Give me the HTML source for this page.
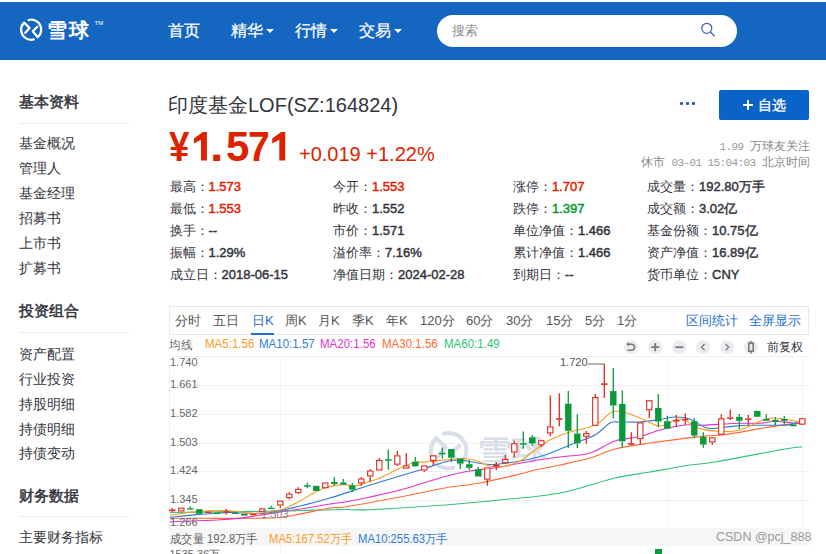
<!DOCTYPE html>
<html><head><meta charset="utf-8">
<style>
*{margin:0;padding:0;box-sizing:border-box}
html,body{width:826px;height:554px;overflow:hidden;background:#fff;font-family:"Liberation Sans",sans-serif;color:#33353c}
.a{position:absolute;white-space:nowrap}
#hdr{position:absolute;left:0;top:2px;width:826px;height:58px;background:#1566c0}
.nav{color:#fff;font-size:16px;top:20.5px;-webkit-text-stroke:0.25px #fff}
.caret{display:inline-block;width:0;height:0;border-left:4px solid transparent;border-right:4px solid transparent;border-top:4px solid #fff;vertical-align:middle;margin-left:3px;position:relative;top:0px}
#search{left:437px;top:15px;width:300px;height:32px;background:#fff;border-radius:16px}
.side{font-size:14px;color:#33353c;left:19px}
.sideh{font-size:15px;font-weight:500;-webkit-text-stroke:0.5px #33353c;color:#33353c;left:19px}
.sline{position:absolute;left:19px;width:110px;height:1px;background:#e6edf3}
.q{font-size:13px;color:#33353c}
.q b{color:#33353c;font-weight:normal;-webkit-text-stroke:0.45px}
.r{color:#dd2200!important}
.g{color:#009933!important}
.tab{top:312px;font-size:13px;color:#555}
.ma{top:337px;font-size:12px;transform:scaleX(0.96);transform-origin:0 0}
.ic{top:340px;width:14px;height:14px;border-radius:7px;background:#ebecef;color:#888;font-size:11px;line-height:14px;text-align:center}
.ax{left:170px;font-size:11px;color:#666}
.vol{top:531px;font-size:12px;transform:scaleX(0.94);transform-origin:0 0}
.mono{font-family:"Liberation Mono",monospace;font-size:11px;letter-spacing:-0.6px;color:#999}
.pr{top:123px;font-size:42px;font-weight:bold;color:#dd2200;transform:scaleX(0.93);transform-origin:0 0}
</style></head><body>
<div id="hdr"></div>
<!-- logo -->
<svg class="a" style="left:0;top:0" width="60" height="60" viewBox="0 0 60 60">
 <g fill="none" stroke="#fff" stroke-width="2.3" stroke-linecap="round" stroke-linejoin="round">
 <path d="M33.8 39.4 A10 10 0 0 1 24.1 22.6 L29.5 27.9 L25.3 32.8"/>
 <path d="M28.6 20 A10 10 0 0 1 37.8 37.2 L32.8 31.3 L37.2 26.9"/>
 </g>
</svg>
<div class="a" style="left:47px;top:17px;font-size:20px;font-weight:bold;color:#fff;letter-spacing:2px">雪球</div>
<div class="a" style="left:94.5px;top:20px;font-size:6px;color:#fff">TM</div>
<div class="a nav" style="left:168px">首页</div>
<div class="a nav" style="left:231px">精华<span class="caret"></span></div>
<div class="a nav" style="left:295px">行情<span class="caret"></span></div>
<div class="a nav" style="left:359px">交易<span class="caret"></span></div>
<div class="a" id="search"></div>
<div class="a" style="left:452px;top:22px;font-size:13px;color:#8c8c8c">搜索</div>
<svg class="a" style="left:0;top:0" width="826" height="60" viewBox="0 0 826 60">
 <circle cx="706.8" cy="28.3" r="5" fill="none" stroke="#4a62bd" stroke-width="1.3"/>
 <path d="M710.4 31.9 L714.2 35.7" stroke="#4a62bd" stroke-width="1.4" stroke-linecap="round"/>
</svg>

<!-- sidebar -->
<div class="a sideh" style="top:93px">基本资料</div>
<div class="sline" style="top:123px"></div>
<div class="a side" style="top:135px">基金概况</div>
<div class="a side" style="top:160px">管理人</div>
<div class="a side" style="top:185px">基金经理</div>
<div class="a side" style="top:210px">招募书</div>
<div class="a side" style="top:235px">上市书</div>
<div class="a side" style="top:260px">扩募书</div>
<div class="a sideh" style="top:302px">投资组合</div>
<div class="sline" style="top:332px"></div>
<div class="a side" style="top:345.5px">资产配置</div>
<div class="a side" style="top:370.5px">行业投资</div>
<div class="a side" style="top:395.5px">持股明细</div>
<div class="a side" style="top:420.5px">持债明细</div>
<div class="a side" style="top:445px">持债变动</div>
<div class="a sideh" style="top:486.5px">财务数据</div>
<div class="sline" style="top:516px"></div>
<div class="a side" style="top:528.5px">主要财务指标</div>

<!-- title -->
<div class="a" style="left:168px;top:92px;font-size:20px;color:#33353c">印度基金LOF(SZ:164824)</div>
<div class="a" style="left:680px;top:102px;width:3px;height:3px;background:#1e5ab4;border-radius:1px"></div><div class="a" style="left:686px;top:102px;width:3px;height:3px;background:#1e5ab4;border-radius:1px"></div><div class="a" style="left:692px;top:102px;width:3px;height:3px;background:#1e5ab4;border-radius:1px"></div>
<div class="a" style="left:719px;top:90px;width:90px;height:30px;background:#0a63c9;border-radius:2px;color:#fff;font-size:14px;text-align:center;line-height:30px;font-weight:500;-webkit-text-stroke:0.3px #fff"><span style="display:inline-block;position:relative;width:10px;height:10px;margin-right:5px;top:0px"><i style="position:absolute;left:0;top:4px;width:10px;height:2px;background:#fff"></i><i style="position:absolute;left:4px;top:0;width:2px;height:10px;background:#fff"></i></span>自选</div>
<div class="a pr" style="left:168.5px;transform:scaleX(0.87)">¥</div><svg class="a" style="left:0;top:0" width="300" height="170" viewBox="0 0 300 170"><g fill="#dd2200">
<polygon points="202.8,131.9 206.9,131.9 206.9,160.6 201,160.6 201,139.8 193.9,143.6 193.9,138.4"/>
<polygon transform="translate(78.3,0)" points="202.8,131.9 206.9,131.9 206.9,160.6 201,160.6 201,139.8 193.9,143.6 193.9,138.4"/>
</g></svg><div class="a pr" style="left:209.5px;transform:scaleX(1.15)">.</div><div class="a pr" style="left:226px;transform:scaleX(1)">5</div><div class="a pr" style="left:247.5px">7</div>
<div class="a" style="left:299px;top:143px;font-size:20px;color:#dd2200">+0.019 +1.22%</div>
<div class="a" style="right:16.5px;top:138px;font-size:12px;color:#888"><span class="mono">1.99 </span>万球友关注</div>
<div class="a" style="right:16.5px;top:154px;font-size:12px;color:#888">休市<span class="mono"> 03-01 15:04:03 </span>北京时间</div>

<!-- quote table -->
<div class="a q" style="left:169.5px;top:178px">最高：<b class="r">1.573</b></div>
<div class="a q" style="left:169.5px;top:200px">最低：<b class="r">1.553</b></div>
<div class="a q" style="left:169.5px;top:222px">换手：<b>--</b></div>
<div class="a q" style="left:169.5px;top:244px">振幅：<b>1.29%</b></div>
<div class="a q" style="left:169.5px;top:266px">成立日：<b>2018-06-15</b></div>
<div class="a q" style="left:333px;top:178px">今开：<b class="r">1.553</b></div>
<div class="a q" style="left:333px;top:200px">昨收：<b>1.552</b></div>
<div class="a q" style="left:333px;top:222px">市价：<b>1.571</b></div>
<div class="a q" style="left:333px;top:244px">溢价率：<b>7.16%</b></div>
<div class="a q" style="left:333px;top:266px">净值日期：<b>2024-02-28</b></div>
<div class="a q" style="left:513px;top:178px">涨停：<b class="r">1.707</b></div>
<div class="a q" style="left:513px;top:200px">跌停：<b class="g">1.397</b></div>
<div class="a q" style="left:513px;top:222px">单位净值：<b>1.466</b></div>
<div class="a q" style="left:513px;top:244px">累计净值：<b>1.466</b></div>
<div class="a q" style="left:513px;top:266px">到期日：<b>--</b></div>
<div class="a q" style="left:647px;top:178px">成交量：<b>192.80万手</b></div>
<div class="a q" style="left:647px;top:200px">成交额：<b>3.02亿</b></div>
<div class="a q" style="left:647px;top:222px">基金份额：<b>10.75亿</b></div>
<div class="a q" style="left:647px;top:244px">资产净值：<b>16.89亿</b></div>
<div class="a q" style="left:647px;top:266px">货币单位：<b>CNY</b></div>


<!-- chart -->
<div class="a" style="left:169px;top:306px;width:640px;height:29px;border:1px solid #e8e8ea"></div>
<div class="a tab" style="left:175px">分时</div>
<div class="a tab" style="left:213px">五日</div>
<div class="a tab" style="left:252px;color:#1e6fd0">日K</div>
<div class="a" style="left:251px;top:333px;width:23px;height:2px;background:#1e6fd0"></div>
<div class="a tab" style="left:285px">周K</div>
<div class="a tab" style="left:318px">月K</div>
<div class="a tab" style="left:352px">季K</div>
<div class="a tab" style="left:386px">年K</div>
<div class="a tab" style="left:420px">120分</div>
<div class="a tab" style="left:466px">60分</div>
<div class="a tab" style="left:506px">30分</div>
<div class="a tab" style="left:546px">15分</div>
<div class="a tab" style="left:585px">5分</div>
<div class="a tab" style="left:617px">1分</div>
<div class="a tab" style="left:686px;color:#1e6fd0">区间统计</div>
<div class="a tab" style="left:749px;color:#1e6fd0">全屏显示</div>
<div class="a ma" style="left:169px;color:#666">均线</div>
<div class="a ma" style="left:204.5px;color:#ff9a1f">MA5:1.56</div>
<div class="a ma" style="left:259px;color:#2f7bd8">MA10:1.57</div>
<div class="a ma" style="left:319.5px;color:#e133c8">MA20:1.56</div>
<div class="a ma" style="left:382px;color:#ff6a33">MA30:1.56</div>
<div class="a ma" style="left:444px;color:#2fc27a">MA60:1.49</div>
<svg class="a" style="left:610px;top:330px" width="160" height="30" viewBox="610 330 160 30">
<g fill="#ebecef"><circle cx="631.2" cy="347.2" r="7"/><circle cx="655.2" cy="347.2" r="7"/><circle cx="679.3" cy="347.2" r="7"/><circle cx="703.1" cy="347.2" r="7"/><circle cx="727.1" cy="347.2" r="7"/><circle cx="751" cy="347.2" r="7"/></g>
<g fill="none" stroke="#7a7a7a" stroke-width="1.5">
<path d="M627.5 344.2 H631.5 A3 3 0 0 1 631.5 350.2 H627.5"/>
<path d="M629 342.7 L627.3 344.2 L629 345.7" stroke-width="1.2"/>
<path d="M651.2 347.2 H659.2 M655.2 343.2 V351.2" stroke-width="1.8"/>
<path d="M675.3 347.2 H683.3" stroke-width="1.8"/>
<path d="M704.6 344 L701.5 347.2 L704.6 350.4" stroke-width="1.3"/>
<path d="M725.6 344 L728.7 347.2 L725.6 350.4" stroke-width="1.3"/>
<rect x="748.8" y="343.2" width="4.4" height="8" stroke-width="1.6"/>
<path d="M751 341 V343.2 M751 351.2 V353.4" stroke-width="1.4"/>
</g>
</svg>
<div class="a" style="left:767px;top:339px;font-size:12px;color:#33353c">前复权</div>
<div class="a" style="left:169px;top:528px;width:640px;height:18px;background:#f6f6f7"></div>
<svg class="a" style="left:0;top:0" width="826" height="554" viewBox="0 0 826 554">
<g stroke="#f0f0f0" stroke-width="1">
<line x1="169.5" y1="356.5" x2="809" y2="356.5"/>
<line x1="169.5" y1="385.5" x2="809" y2="385.5"/>
<line x1="169.5" y1="414.5" x2="809" y2="414.5"/>
<line x1="169.5" y1="443.5" x2="809" y2="443.5"/>
<line x1="169.5" y1="471.5" x2="809" y2="471.5"/>
<line x1="169.5" y1="500.5" x2="809" y2="500.5"/>
<line x1="169.5" y1="356" x2="169.5" y2="528"/>
<line x1="280.5" y1="356" x2="280.5" y2="554" stroke="#f4f4f4"/>
<line x1="667.5" y1="356" x2="667.5" y2="554" stroke="#f4f4f4"/>
<line x1="802.5" y1="356" x2="802.5" y2="528" stroke="#f4f4f4"/>
</g>
<g transform="translate(448.6,450.7) scale(1.76) translate(-31.2,-29.7)" fill="none" stroke="#d8dfe9" stroke-width="2.3" stroke-linecap="round" stroke-linejoin="round">
 <path d="M33.8 39.4 A10 10 0 0 1 24.1 22.6 L29.5 27.9 L25.3 32.8"/>
 <path d="M28.6 20 A10 10 0 0 1 37.8 37.2 L32.8 31.3 L37.2 26.9"/>
</g>
<text transform="translate(477,459) scale(1.3,1)" x="0" y="0" font-size="27" font-weight="bold" fill="#d8dfe9" font-family="Liberation Sans, sans-serif">雪球</text>
<path d="M170,512.5 C185.8,512.3 243.3,511.6 265,511.3 C286.7,511.0 286.7,510.8 300,510.5 C313.3,510.2 333.3,509.6 345,509.5 C356.7,509.4 353.3,510.4 370,509.7 C386.7,508.9 423.3,506.6 445,505 C466.7,503.4 480.8,502.0 500,500 C519.2,498.0 540.8,496.7 560,493 C579.2,489.3 600.0,481.5 615,478 C630.0,474.5 637.5,474.2 650,472 C662.5,469.8 679.2,466.7 690,465 C700.8,463.3 699.2,464.7 715,462 C730.8,459.3 770.5,451.5 785,449 C799.5,446.5 799.2,447.2 802,446.9" fill="none" stroke="#2fc27a" stroke-width="1.1"/>
<path d="M170,518.2 C185.8,518.2 245.0,518.6 265,518.2 C285.0,517.8 279.2,517.7 290,516 C300.8,514.3 320.8,509.5 330,508 C339.2,506.5 333.3,508.8 345,507 C356.7,505.2 383.3,500.2 400,497 C416.7,493.8 431.7,490.3 445,488 C458.3,485.7 467.5,485.3 480,483 C492.5,480.7 510.8,476.2 520,474 C529.2,471.8 528.3,471.5 535,470 C541.7,468.5 550.8,467.0 560,465 C569.2,463.0 580.8,460.7 590,458 C599.2,455.3 605.0,451.5 615,449 C625.0,446.5 635.8,445.1 650,443 C664.2,440.9 687.5,438.0 700,436.6 C712.5,435.2 715.0,435.9 725,434.6 C735.0,433.3 750.0,430.3 760,428.6 C770.0,426.9 778.0,425.5 785,424.6 C792.0,423.7 799.2,423.5 802,423.3" fill="none" stroke="#ff6a33" stroke-width="1.1"/>
<path d="M170,521.9 C178.3,521.5 206.7,520.6 220,519.8 C233.3,518.9 242.5,517.7 250,516.8 C257.5,515.9 256.7,515.7 265,514.4 C273.3,513.1 289.2,510.7 300,509 C310.8,507.3 322.5,505.2 330,504 C337.5,502.8 338.3,503.2 345,502 C351.7,500.8 360.8,499.0 370,497 C379.2,495.0 387.5,493.4 400,490 C412.5,486.6 433.3,479.7 445,476.5 C456.7,473.3 460.8,472.6 470,471 C479.2,469.4 489.2,468.8 500,467 C510.8,465.2 525.0,462.2 535,460.5 C545.0,458.8 550.8,458.2 560,457 C569.2,455.8 580.8,455.7 590,453 C599.2,450.3 606.7,443.8 615,441 C623.3,438.2 632.5,438.3 640,436.5 C647.5,434.7 652.5,431.9 660,430 C667.5,428.1 678.3,425.8 685,425 C691.7,424.2 690.8,425.6 700,425.3 C709.2,425.0 730.0,423.6 740,423.3 C750.0,423.0 754.2,423.6 760,423.3 C765.8,423.0 770.0,421.4 775,421.3 C780.0,421.2 785.5,422.2 790,422.6 C794.5,423.1 800.0,423.8 802,424" fill="none" stroke="#e133c8" stroke-width="1.1"/>
<path d="M170,517.4 C175.0,516.9 190.0,515.2 200,514.4 C210.0,513.6 219.2,512.7 230,512.5 C240.8,512.3 253.3,514.3 265,513.2 C276.7,512.1 289.2,508.5 300,506 C310.8,503.5 320.8,500.7 330,498 C339.2,495.3 346.7,492.7 355,490 C363.3,487.3 369.2,485.3 380,482 C390.8,478.7 409.2,473.3 420,470 C430.8,466.7 438.3,463.7 445,462 C451.7,460.3 452.5,459.6 460,460 C467.5,460.4 480.0,464.3 490,464.5 C500.0,464.7 510.8,462.6 520,461 C529.2,459.4 535.8,458.0 545,455 C554.2,452.0 566.7,446.3 575,443 C583.3,439.7 589.2,438.3 595,435 C600.8,431.7 605.8,425.2 610,423 C614.2,420.8 615.0,422.2 620,422 C625.0,421.8 633.3,422.4 640,422 C646.7,421.6 654.2,420.3 660,419.5 C665.8,418.7 670.0,417.1 675,417 C680.0,416.9 685.0,417.2 690,419 C695.0,420.8 700.8,425.9 705,427.5 C709.2,429.1 710.8,428.5 715,428.4 C719.2,428.2 724.2,427.1 730,426.6 C735.8,426.1 741.7,425.5 750,425.3 C758.3,425.1 773.3,425.4 780,425.3 C786.7,425.2 786.3,425.4 790,424.6 C793.7,423.8 800.0,421.3 802,420.6" fill="none" stroke="#2f7bd8" stroke-width="1.1"/>
<path d="M170,515.3 C175.0,514.6 190.0,512.0 200,511.3 C210.0,510.6 220.8,510.5 230,510.8 C239.2,511.1 246.7,513.4 255,513.3 C263.3,513.2 272.8,511.9 280,510 C287.2,508.1 292.5,504.8 298,502 C303.5,499.2 308.7,495.7 313,493.4 C317.3,491.1 320.2,489.6 324,488.3 C327.8,487.0 332.5,486.0 336,485.4 C339.5,484.8 341.8,484.6 345,484.7 C348.2,484.8 351.7,486.3 355,486 C358.3,485.7 360.8,484.3 365,483 C369.2,481.7 374.2,480.5 380,478 C385.8,475.5 394.5,470.5 400,468 C405.5,465.5 408.0,464.1 413,463 C418.0,461.9 424.7,462.0 430,461.5 C435.3,461.0 440.0,460.4 445,460 C450.0,459.6 455.5,459.1 460,459 C464.5,458.9 467.0,458.3 472,459.5 C477.0,460.7 485.0,464.8 490,466 C495.0,467.2 497.0,467.8 502,467 C507.0,466.2 514.5,463.8 520,461 C525.5,458.2 530.0,453.5 535,450 C540.0,446.5 544.2,443.0 550,440 C555.8,437.0 563.3,434.2 570,432 C576.7,429.8 585.0,428.7 590,427 C595.0,425.3 596.3,424.5 600,422 C603.7,419.5 607.8,413.6 612,412 C616.2,410.4 620.3,411.5 625,412.5 C629.7,413.5 634.2,415.8 640,418 C645.8,420.2 653.3,425.8 660,426 C666.7,426.2 673.3,418.6 680,419 C686.7,419.4 693.3,426.6 700,428.6 C706.7,430.7 714.2,430.9 720,431.3 C725.8,431.7 730.0,431.9 735,431 C740.0,430.1 745.5,427.8 750,426 C754.5,424.2 758.3,421.8 762,420.5 C765.7,419.2 767.3,418.1 772,418 C776.7,417.9 785.0,419.2 790,420 C795.0,420.8 800.0,422.5 802,423" fill="none" stroke="#ff9a1f" stroke-width="1.1"/>
<line x1="172.3" y1="508" x2="172.3" y2="509.5" stroke="#e0281e" stroke-width="1.3"/>
<line x1="172.3" y1="511.2" x2="172.3" y2="512" stroke="#e0281e" stroke-width="1.3"/>
<rect x="169.10" y="509.50" width="6.40" height="1.70" fill="#e0281e"/>
<rect x="178.65" y="508.15" width="5.30" height="2.80" fill="#fff" stroke="#e0281e" stroke-width="1.1"/>
<line x1="190.3" y1="506.5" x2="190.3" y2="508.2" stroke="#0a9a3a" stroke-width="1.3"/>
<rect x="187.10" y="508.20" width="6.40" height="1.40" fill="#0a9a3a"/>
<rect x="196.10" y="509.20" width="6.40" height="4.60" fill="#0a9a3a"/>
<rect x="205.10" y="511.60" width="6.40" height="1.30" fill="#e0281e"/>
<rect x="214.10" y="512.50" width="6.40" height="1.50" fill="#0a9a3a"/>
<line x1="226.3" y1="509" x2="226.3" y2="511.3" stroke="#e0281e" stroke-width="1.3"/>
<line x1="226.3" y1="512.6" x2="226.3" y2="514.4" stroke="#e0281e" stroke-width="1.3"/>
<rect x="223.10" y="511.30" width="6.40" height="1.30" fill="#e0281e"/>
<rect x="232.10" y="512.50" width="6.40" height="1.50" fill="#0a9a3a"/>
<rect x="241.10" y="513.80" width="6.40" height="1.80" fill="#0a9a3a"/>
<rect x="250.10" y="513.80" width="6.40" height="1.60" fill="#e0281e"/>
<rect x="259.65" y="508.85" width="5.30" height="2.70" fill="#fff" stroke="#e0281e" stroke-width="1.1"/>
<line x1="271.3" y1="505.8" x2="271.3" y2="507.6" stroke="#0a9a3a" stroke-width="1.3"/>
<rect x="268.10" y="507.60" width="6.40" height="1.40" fill="#0a9a3a"/>
<line x1="280.3" y1="505.6" x2="280.3" y2="508" stroke="#e0281e" stroke-width="1.3"/>
<rect x="277.65" y="501.15" width="5.30" height="3.90" fill="#fff" stroke="#e0281e" stroke-width="1.1"/>
<line x1="289.3" y1="492" x2="289.3" y2="493.6" stroke="#e0281e" stroke-width="1.3"/>
<line x1="289.3" y1="498.2" x2="289.3" y2="499.5" stroke="#e0281e" stroke-width="1.3"/>
<rect x="286.65" y="494.15" width="5.30" height="3.50" fill="#fff" stroke="#e0281e" stroke-width="1.1"/>
<line x1="298.3" y1="487.3" x2="298.3" y2="488.8" stroke="#e0281e" stroke-width="1.3"/>
<line x1="298.3" y1="493.2" x2="298.3" y2="494" stroke="#e0281e" stroke-width="1.3"/>
<rect x="295.65" y="489.35" width="5.30" height="3.30" fill="#fff" stroke="#e0281e" stroke-width="1.1"/>
<line x1="307.3" y1="482.8" x2="307.3" y2="485.2" stroke="#0a9a3a" stroke-width="1.3"/>
<line x1="307.3" y1="486.8" x2="307.3" y2="488.2" stroke="#0a9a3a" stroke-width="1.3"/>
<rect x="304.10" y="485.20" width="6.40" height="1.60" fill="#0a9a3a"/>
<rect x="313.10" y="485.80" width="6.40" height="5.20" fill="#0a9a3a"/>
<rect x="322.65" y="483.05" width="5.30" height="4.70" fill="#fff" stroke="#e0281e" stroke-width="1.1"/>
<line x1="334.3" y1="477.1" x2="334.3" y2="482" stroke="#0a9a3a" stroke-width="1.3"/>
<line x1="334.3" y1="484" x2="334.3" y2="485.8" stroke="#0a9a3a" stroke-width="1.3"/>
<rect x="331.10" y="482.00" width="6.40" height="2.00" fill="#0a9a3a"/>
<line x1="343.3" y1="479" x2="343.3" y2="482.5" stroke="#0a9a3a" stroke-width="1.3"/>
<rect x="340.10" y="482.50" width="6.40" height="2.20" fill="#0a9a3a"/>
<line x1="352.3" y1="483" x2="352.3" y2="485.3" stroke="#0a9a3a" stroke-width="1.3"/>
<line x1="352.3" y1="489.7" x2="352.3" y2="492" stroke="#0a9a3a" stroke-width="1.3"/>
<rect x="349.10" y="485.30" width="6.40" height="4.40" fill="#0a9a3a"/>
<line x1="361.3" y1="477" x2="361.3" y2="478.4" stroke="#e0281e" stroke-width="1.3"/>
<line x1="361.3" y1="483.5" x2="361.3" y2="486" stroke="#e0281e" stroke-width="1.3"/>
<rect x="358.65" y="478.95" width="5.30" height="4.00" fill="#fff" stroke="#e0281e" stroke-width="1.1"/>
<line x1="370.3" y1="469" x2="370.3" y2="470.5" stroke="#e0281e" stroke-width="1.3"/>
<line x1="370.3" y1="476.5" x2="370.3" y2="482" stroke="#e0281e" stroke-width="1.3"/>
<rect x="367.65" y="471.05" width="5.30" height="4.90" fill="#fff" stroke="#e0281e" stroke-width="1.1"/>
<line x1="379.3" y1="458" x2="379.3" y2="460" stroke="#e0281e" stroke-width="1.3"/>
<rect x="376.65" y="460.55" width="5.30" height="9.40" fill="#fff" stroke="#e0281e" stroke-width="1.1"/>
<line x1="388.3" y1="449.5" x2="388.3" y2="459.2" stroke="#0a9a3a" stroke-width="1.3"/>
<line x1="388.3" y1="460.8" x2="388.3" y2="469.7" stroke="#0a9a3a" stroke-width="1.3"/>
<rect x="385.10" y="459.20" width="6.40" height="1.60" fill="#0a9a3a"/>
<line x1="397.3" y1="451" x2="397.3" y2="455.3" stroke="#e0281e" stroke-width="1.3"/>
<line x1="397.3" y1="464.7" x2="397.3" y2="466" stroke="#e0281e" stroke-width="1.3"/>
<rect x="394.65" y="455.85" width="5.30" height="8.30" fill="#fff" stroke="#e0281e" stroke-width="1.1"/>
<line x1="406.3" y1="453" x2="406.3" y2="465.4" stroke="#e0281e" stroke-width="1.3"/>
<rect x="403.65" y="465.95" width="5.30" height="2.20" fill="#fff" stroke="#e0281e" stroke-width="1.1"/>
<line x1="415.3" y1="457" x2="415.3" y2="461.5" stroke="#0a9a3a" stroke-width="1.3"/>
<rect x="412.10" y="461.50" width="6.40" height="4.90" fill="#0a9a3a"/>
<line x1="424.3" y1="470.5" x2="424.3" y2="472" stroke="#e0281e" stroke-width="1.3"/>
<rect x="421.65" y="465.95" width="5.30" height="4.00" fill="#fff" stroke="#e0281e" stroke-width="1.1"/>
<line x1="433.3" y1="461" x2="433.3" y2="466" stroke="#e0281e" stroke-width="1.3"/>
<rect x="430.65" y="455.85" width="5.30" height="4.60" fill="#fff" stroke="#e0281e" stroke-width="1.1"/>
<line x1="442.3" y1="447.6" x2="442.3" y2="452.7" stroke="#0a9a3a" stroke-width="1.3"/>
<line x1="442.3" y1="454.3" x2="442.3" y2="458.4" stroke="#0a9a3a" stroke-width="1.3"/>
<rect x="439.10" y="452.70" width="6.40" height="1.60" fill="#0a9a3a"/>
<line x1="451.3" y1="457.7" x2="451.3" y2="462" stroke="#0a9a3a" stroke-width="1.3"/>
<rect x="448.10" y="449.00" width="6.40" height="8.70" fill="#0a9a3a"/>
<line x1="460.3" y1="463.5" x2="460.3" y2="469" stroke="#0a9a3a" stroke-width="1.3"/>
<rect x="457.10" y="458.40" width="6.40" height="5.10" fill="#0a9a3a"/>
<line x1="469.3" y1="460" x2="469.3" y2="464.2" stroke="#0a9a3a" stroke-width="1.3"/>
<line x1="469.3" y1="467.8" x2="469.3" y2="470" stroke="#0a9a3a" stroke-width="1.3"/>
<rect x="466.10" y="464.20" width="6.40" height="3.60" fill="#0a9a3a"/>
<line x1="478.3" y1="467" x2="478.3" y2="469.2" stroke="#0a9a3a" stroke-width="1.3"/>
<rect x="475.10" y="469.20" width="6.40" height="7.30" fill="#0a9a3a"/>
<line x1="487.3" y1="479.7" x2="487.3" y2="485.7" stroke="#e0281e" stroke-width="1.3"/>
<rect x="484.65" y="467.95" width="5.30" height="11.20" fill="#fff" stroke="#e0281e" stroke-width="1.1"/>
<line x1="496.3" y1="462" x2="496.3" y2="464.6" stroke="#e0281e" stroke-width="1.3"/>
<line x1="496.3" y1="466.6" x2="496.3" y2="470" stroke="#e0281e" stroke-width="1.3"/>
<rect x="493.10" y="464.60" width="6.40" height="2.00" fill="#e0281e"/>
<line x1="505.3" y1="455" x2="505.3" y2="458.8" stroke="#e0281e" stroke-width="1.3"/>
<rect x="502.65" y="459.35" width="5.30" height="3.30" fill="#fff" stroke="#e0281e" stroke-width="1.1"/>
<line x1="514.3" y1="440.5" x2="514.3" y2="443.2" stroke="#e0281e" stroke-width="1.3"/>
<line x1="514.3" y1="452.6" x2="514.3" y2="457.5" stroke="#e0281e" stroke-width="1.3"/>
<rect x="511.65" y="443.75" width="5.30" height="8.30" fill="#fff" stroke="#e0281e" stroke-width="1.1"/>
<line x1="523.3" y1="431.4" x2="523.3" y2="443.2" stroke="#0a9a3a" stroke-width="1.3"/>
<line x1="523.3" y1="444.8" x2="523.3" y2="448.7" stroke="#0a9a3a" stroke-width="1.3"/>
<rect x="520.10" y="443.20" width="6.40" height="1.60" fill="#0a9a3a"/>
<line x1="532.3" y1="435" x2="532.3" y2="437.3" stroke="#0a9a3a" stroke-width="1.3"/>
<line x1="532.3" y1="443.4" x2="532.3" y2="446" stroke="#0a9a3a" stroke-width="1.3"/>
<rect x="529.10" y="437.30" width="6.40" height="6.10" fill="#0a9a3a"/>
<line x1="541.3" y1="445.3" x2="541.3" y2="447" stroke="#e0281e" stroke-width="1.3"/>
<rect x="538.65" y="440.75" width="5.30" height="4.00" fill="#fff" stroke="#e0281e" stroke-width="1.1"/>
<line x1="550.3" y1="395.6" x2="550.3" y2="426.3" stroke="#e0281e" stroke-width="1.3"/>
<line x1="550.3" y1="433.5" x2="550.3" y2="436.2" stroke="#e0281e" stroke-width="1.3"/>
<rect x="547.65" y="426.85" width="5.30" height="6.10" fill="#fff" stroke="#e0281e" stroke-width="1.1"/>
<line x1="559.3" y1="393.3" x2="559.3" y2="418.2" stroke="#e0281e" stroke-width="1.3"/>
<line x1="559.3" y1="419.8" x2="559.3" y2="426.3" stroke="#e0281e" stroke-width="1.3"/>
<rect x="556.10" y="418.20" width="6.40" height="1.60" fill="#e0281e"/>
<line x1="568.3" y1="391.1" x2="568.3" y2="403.7" stroke="#0a9a3a" stroke-width="1.3"/>
<line x1="568.3" y1="430.8" x2="568.3" y2="448" stroke="#0a9a3a" stroke-width="1.3"/>
<rect x="565.10" y="403.70" width="6.40" height="27.10" fill="#0a9a3a"/>
<line x1="577.3" y1="414.2" x2="577.3" y2="433.5" stroke="#0a9a3a" stroke-width="1.3"/>
<line x1="577.3" y1="443.4" x2="577.3" y2="448" stroke="#0a9a3a" stroke-width="1.3"/>
<rect x="574.10" y="433.50" width="6.40" height="9.90" fill="#0a9a3a"/>
<line x1="586.3" y1="431.1" x2="586.3" y2="433" stroke="#e0281e" stroke-width="1.3"/>
<line x1="586.3" y1="436.8" x2="586.3" y2="443.8" stroke="#e0281e" stroke-width="1.3"/>
<rect x="583.65" y="433.55" width="5.30" height="2.70" fill="#fff" stroke="#e0281e" stroke-width="1.1"/>
<line x1="595.3" y1="394" x2="595.3" y2="397" stroke="#e0281e" stroke-width="1.3"/>
<rect x="592.65" y="397.55" width="5.30" height="27.70" fill="#fff" stroke="#e0281e" stroke-width="1.1"/>
<line x1="604.3" y1="364" x2="604.3" y2="383.3" stroke="#e0281e" stroke-width="1.3"/>
<line x1="604.3" y1="384.9" x2="604.3" y2="398" stroke="#e0281e" stroke-width="1.3"/>
<rect x="601.10" y="383.30" width="6.40" height="1.60" fill="#e0281e"/>
<line x1="613.3" y1="368" x2="613.3" y2="391.1" stroke="#0a9a3a" stroke-width="1.3"/>
<line x1="613.3" y1="405.5" x2="613.3" y2="418.5" stroke="#0a9a3a" stroke-width="1.3"/>
<rect x="610.10" y="391.10" width="6.40" height="14.40" fill="#0a9a3a"/>
<line x1="622.3" y1="390.5" x2="622.3" y2="404" stroke="#0a9a3a" stroke-width="1.3"/>
<line x1="622.3" y1="441.4" x2="622.3" y2="447.7" stroke="#0a9a3a" stroke-width="1.3"/>
<rect x="619.10" y="404.00" width="6.40" height="37.40" fill="#0a9a3a"/>
<line x1="631.3" y1="432.3" x2="631.3" y2="443.2" stroke="#e0281e" stroke-width="1.3"/>
<line x1="631.3" y1="444.8" x2="631.3" y2="445.5" stroke="#e0281e" stroke-width="1.3"/>
<rect x="628.10" y="443.20" width="6.40" height="1.60" fill="#e0281e"/>
<line x1="640.3" y1="439.2" x2="640.3" y2="444" stroke="#e0281e" stroke-width="1.3"/>
<rect x="637.65" y="422.95" width="5.30" height="15.70" fill="#fff" stroke="#e0281e" stroke-width="1.1"/>
<line x1="649.3" y1="410.3" x2="649.3" y2="417.9" stroke="#e0281e" stroke-width="1.3"/>
<rect x="646.65" y="400.75" width="5.30" height="9.00" fill="#fff" stroke="#e0281e" stroke-width="1.1"/>
<line x1="658.3" y1="394" x2="658.3" y2="408" stroke="#0a9a3a" stroke-width="1.3"/>
<line x1="658.3" y1="421.5" x2="658.3" y2="427.3" stroke="#0a9a3a" stroke-width="1.3"/>
<rect x="655.10" y="408.00" width="6.40" height="13.50" fill="#0a9a3a"/>
<line x1="667.3" y1="415.7" x2="667.3" y2="421.2" stroke="#0a9a3a" stroke-width="1.3"/>
<rect x="664.10" y="421.20" width="6.40" height="7.50" fill="#0a9a3a"/>
<line x1="676.3" y1="415" x2="676.3" y2="420" stroke="#e0281e" stroke-width="1.3"/>
<line x1="676.3" y1="421.6" x2="676.3" y2="427" stroke="#e0281e" stroke-width="1.3"/>
<rect x="673.10" y="420.00" width="6.40" height="1.60" fill="#e0281e"/>
<line x1="685.3" y1="413.4" x2="685.3" y2="418.8" stroke="#e0281e" stroke-width="1.3"/>
<line x1="685.3" y1="420.4" x2="685.3" y2="424.8" stroke="#e0281e" stroke-width="1.3"/>
<rect x="682.10" y="418.80" width="6.40" height="1.60" fill="#e0281e"/>
<line x1="694.3" y1="418" x2="694.3" y2="421.2" stroke="#0a9a3a" stroke-width="1.3"/>
<line x1="694.3" y1="435.6" x2="694.3" y2="438" stroke="#0a9a3a" stroke-width="1.3"/>
<rect x="691.10" y="421.20" width="6.40" height="14.40" fill="#0a9a3a"/>
<line x1="703.3" y1="432.3" x2="703.3" y2="436.9" stroke="#0a9a3a" stroke-width="1.3"/>
<line x1="703.3" y1="444.6" x2="703.3" y2="447.7" stroke="#0a9a3a" stroke-width="1.3"/>
<rect x="700.10" y="436.90" width="6.40" height="7.70" fill="#0a9a3a"/>
<line x1="712.3" y1="442.5" x2="712.3" y2="445" stroke="#e0281e" stroke-width="1.3"/>
<rect x="709.65" y="437.85" width="5.30" height="4.10" fill="#fff" stroke="#e0281e" stroke-width="1.1"/>
<line x1="721.3" y1="414.2" x2="721.3" y2="418.2" stroke="#e0281e" stroke-width="1.3"/>
<rect x="718.65" y="418.75" width="5.30" height="15.40" fill="#fff" stroke="#e0281e" stroke-width="1.1"/>
<line x1="730.3" y1="409.5" x2="730.3" y2="417.4" stroke="#e0281e" stroke-width="1.3"/>
<line x1="730.3" y1="418.9" x2="730.3" y2="420" stroke="#e0281e" stroke-width="1.3"/>
<rect x="727.10" y="417.40" width="6.40" height="1.50" fill="#e0281e"/>
<line x1="739.3" y1="414" x2="739.3" y2="416.8" stroke="#0a9a3a" stroke-width="1.3"/>
<line x1="739.3" y1="420.8" x2="739.3" y2="429" stroke="#0a9a3a" stroke-width="1.3"/>
<rect x="736.10" y="416.80" width="6.40" height="4.00" fill="#0a9a3a"/>
<line x1="748.3" y1="415" x2="748.3" y2="418.4" stroke="#e0281e" stroke-width="1.3"/>
<line x1="748.3" y1="419.9" x2="748.3" y2="425" stroke="#e0281e" stroke-width="1.3"/>
<rect x="745.10" y="418.40" width="6.40" height="1.50" fill="#e0281e"/>
<rect x="754.10" y="410.90" width="6.40" height="5.90" fill="#0a9a3a"/>
<line x1="766.3" y1="414.2" x2="766.3" y2="418.8" stroke="#0a9a3a" stroke-width="1.3"/>
<rect x="763.10" y="418.80" width="6.40" height="2.00" fill="#0a9a3a"/>
<line x1="775.3" y1="417" x2="775.3" y2="419.8" stroke="#0a9a3a" stroke-width="1.3"/>
<line x1="775.3" y1="421.8" x2="775.3" y2="425" stroke="#0a9a3a" stroke-width="1.3"/>
<rect x="772.10" y="419.80" width="6.40" height="2.00" fill="#0a9a3a"/>
<line x1="784.3" y1="416" x2="784.3" y2="418.8" stroke="#0a9a3a" stroke-width="1.3"/>
<line x1="784.3" y1="420.8" x2="784.3" y2="424" stroke="#0a9a3a" stroke-width="1.3"/>
<rect x="781.10" y="418.80" width="6.40" height="2.00" fill="#0a9a3a"/>
<rect x="790.10" y="424.40" width="6.40" height="1.90" fill="#0a9a3a"/>
<rect x="799.65" y="418.75" width="5.30" height="5.40" fill="#fff" stroke="#e0281e" stroke-width="1.1"/>
<line x1="588" y1="364" x2="604.3" y2="364" stroke="#666" stroke-width="1"/>
<line x1="288" y1="510.8" x2="296" y2="510.8" stroke="#999" stroke-width="1"/>
</svg>
<div class="a ax" style="top:356px">1.740</div>
<div class="a ax" style="top:378px">1.661</div>
<div class="a ax" style="top:407px">1.582</div>
<div class="a ax" style="top:436px">1.503</div>
<div class="a ax" style="top:464px">1.424</div>
<div class="a ax" style="top:493px">1.345</div>
<div class="a ax" style="top:516px">1.266</div>
<div class="a" style="left:560px;top:356px;font-size:11px;color:#555">1.720</div>
<div class="a" style="left:261px;top:508px;font-size:11px;color:#888">1.303</div>
<div class="a vol" style="left:169.5px;color:#666">成交量 192.8万手</div>
<div class="a vol" style="left:269px;color:#ff9a1f">MA5:167.52万手</div>
<div class="a vol" style="left:358.4px;color:#2f7bd8">MA10:255.63万手</div>
<div class="a" style="left:169.5px;top:547px;font-size:11px;color:#666">1535.36万</div>
<div class="a" style="left:655px;top:549px;width:7px;height:5px;background:#0a9a3a"></div>
<div class="a" style="left:716px;top:529.5px;font-size:12.5px;color:#9a9a9a">CSDN @pcj_888</div>
</body></html>
